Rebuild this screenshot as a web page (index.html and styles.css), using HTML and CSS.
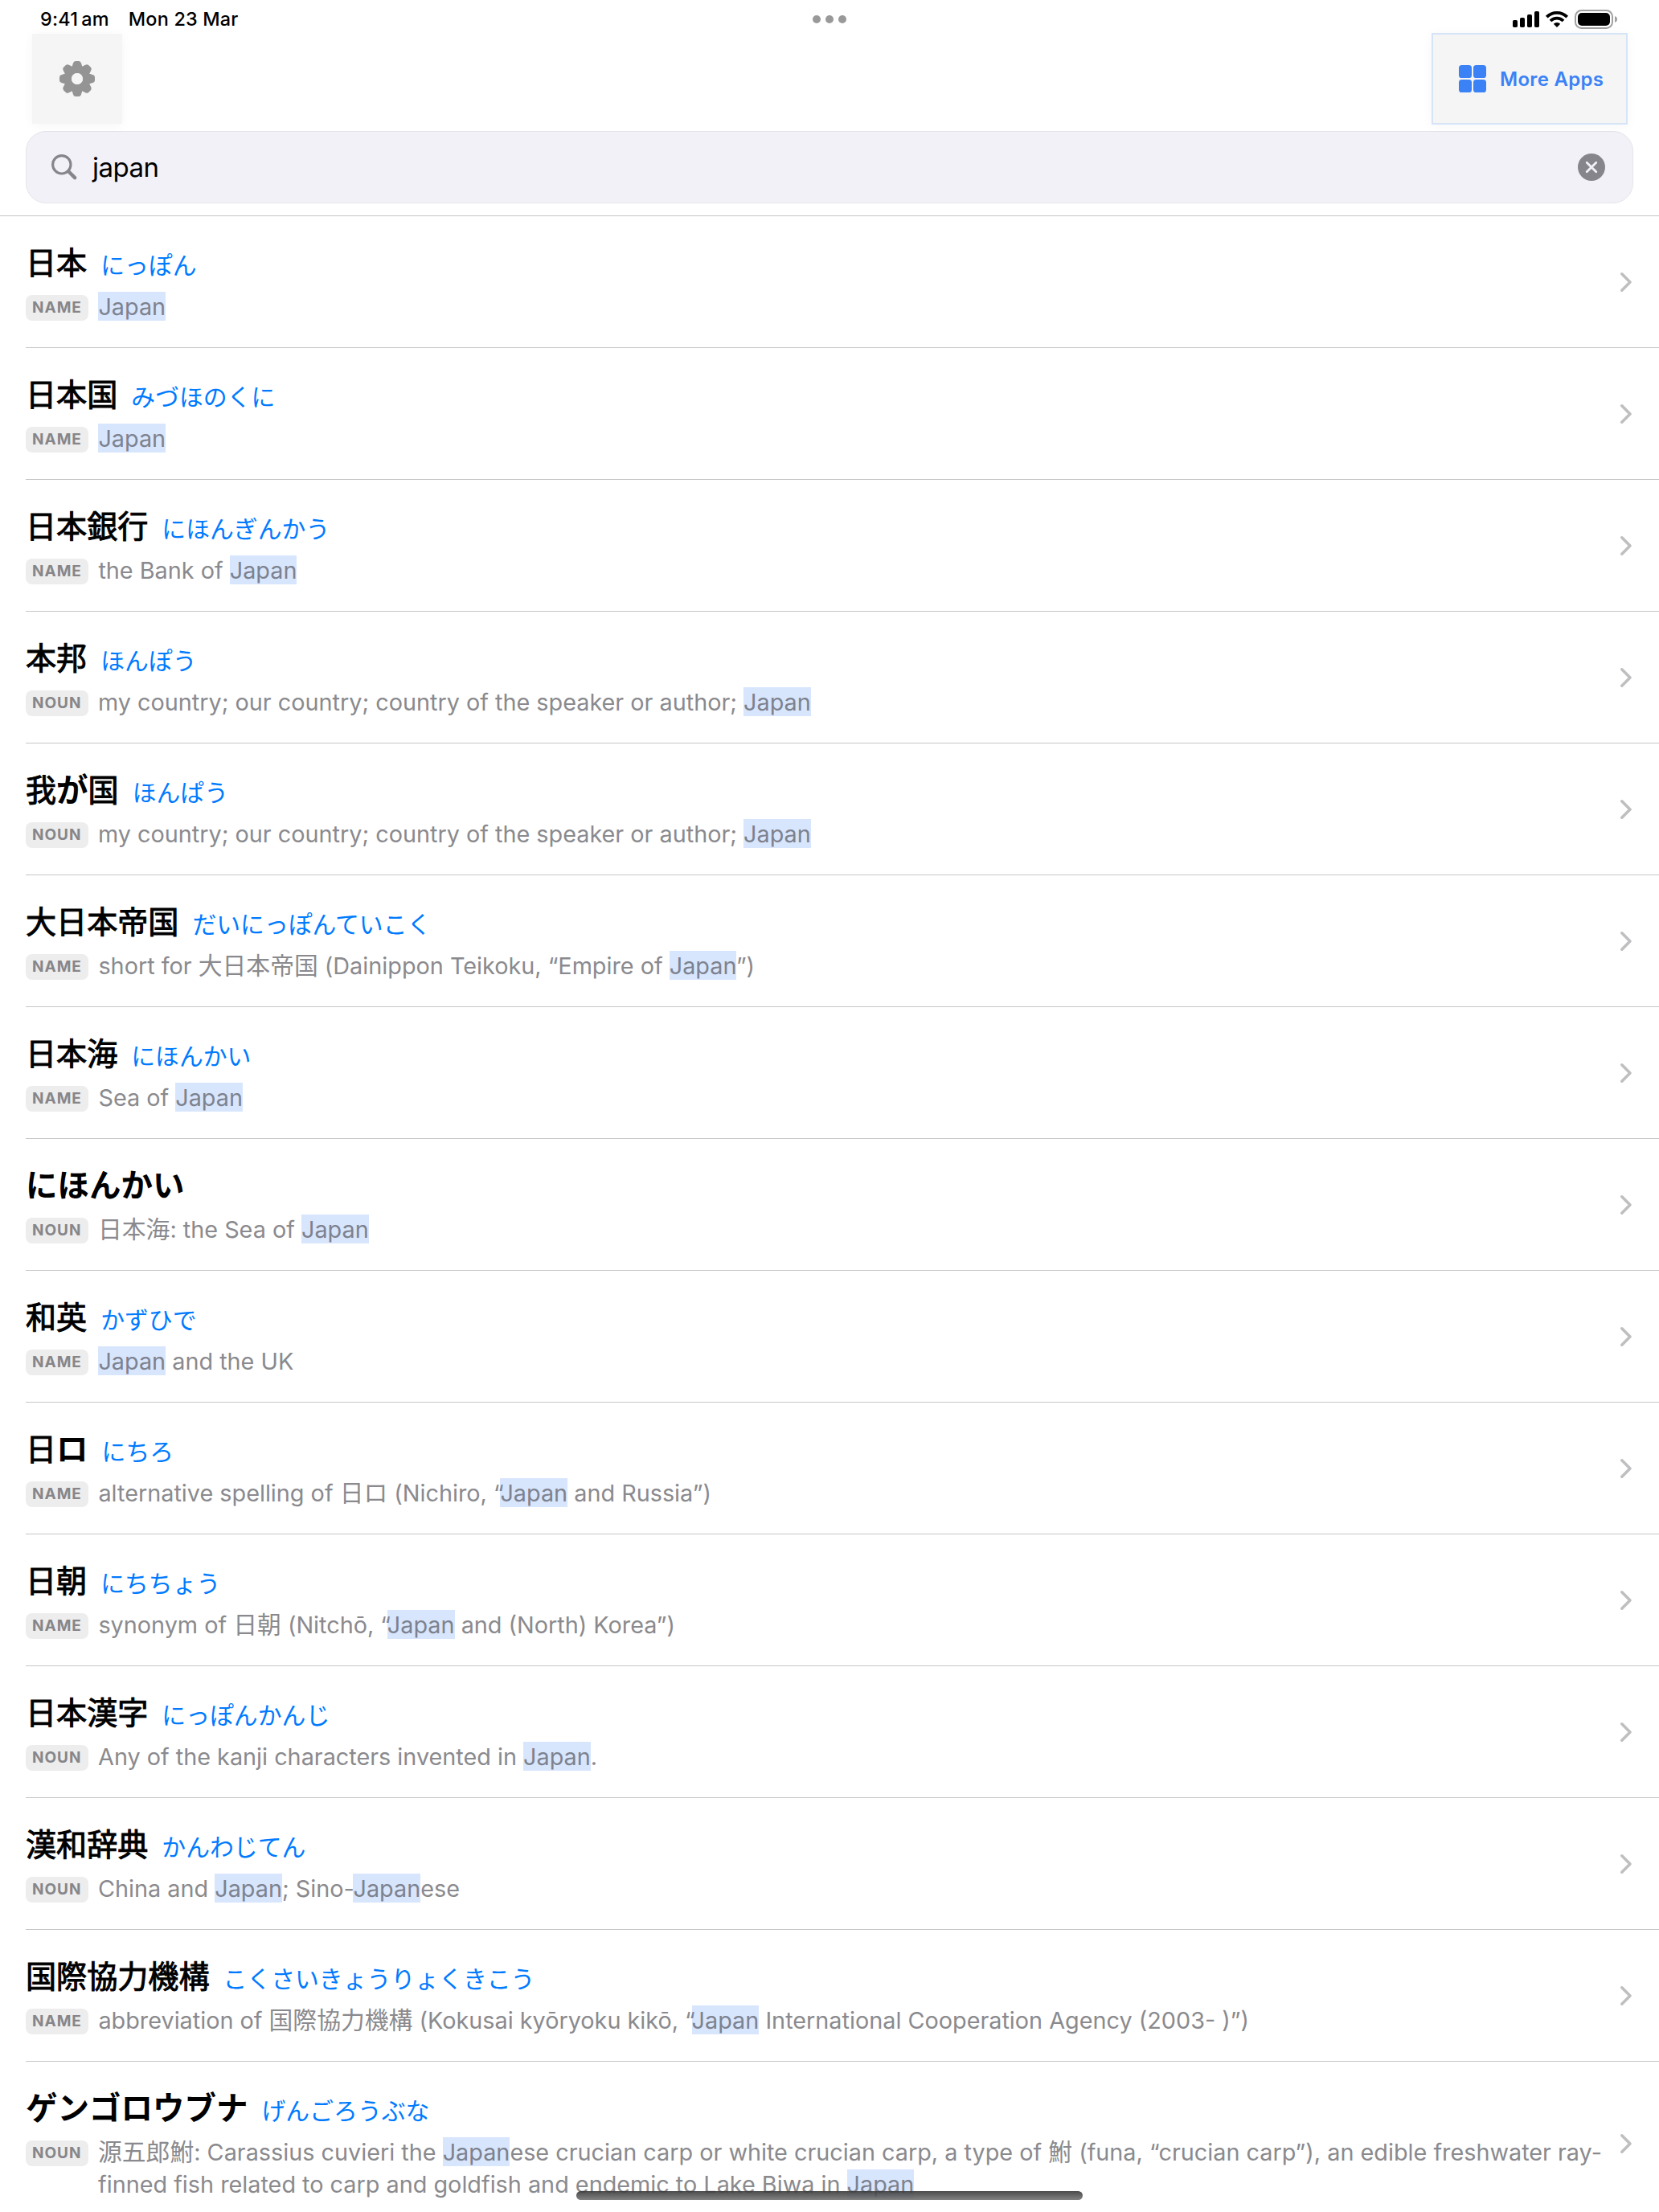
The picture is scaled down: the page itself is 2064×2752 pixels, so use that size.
FILE: index.html
```
<!DOCTYPE html>
<html lang="ja">
<head>
    <meta charset="UTF-8">
    <meta name="viewport" content="width=device-width, initial-scale=1.0">
    <title>Japanese Dictionary</title>
    <link rel="stylesheet" href="styles.css">
</head>
<body>

    <div class="status-bar">
        <div class="status-left">
            <span class="time">9:41&#8201;am</span>
            <span class="date">Mon 23 Mar</span>
        </div>
        <div class="dots"><i></i><i></i><i></i></div>
        <svg class="status-icons" width="132" height="26" viewBox="0 0 132 26">
            <rect x="0" y="14" width="6" height="9" rx="1.8"/>
            <rect x="9" y="11" width="6" height="12" rx="1.8"/>
            <rect x="18" y="7" width="6" height="16" rx="1.8"/>
            <rect x="27" y="3" width="6" height="20" rx="1.8"/>
            <g fill="none" stroke="#000" stroke-width="3.8">
                <path d="M42.3 10.2a18 18 0 0 1 25.4 0"/>
                <path d="M47 15a11.4 11.4 0 0 1 16 0"/>
            </g>
            <path d="M55 23l-4.2-4.3a6 6 0 0 1 8.4 0z"/>
            <rect x="78" y="2" width="46" height="22" rx="7.5" fill="none" stroke="#a0a0a0" stroke-width="2"/>
            <rect x="81" y="5" width="40" height="16" rx="5"/>
            <path d="M127 9q3 1.2 3 4t-3 4z" fill="#a0a0a0"/>
        </svg>
    </div>

    <header>
        <button class="settings-btn">
            <svg width="44" height="44" viewBox="-22 -22 44 44" fill="#949494">
                <defs><path id="tooth" d="M-7-13L-5-19.4Q-4.3-22-2-22H2Q4.3-22 5-19.4L7-13z"/></defs>
                <use href="#tooth"/>
                <use href="#tooth" transform="rotate(45)"/>
                <use href="#tooth" transform="rotate(90)"/>
                <use href="#tooth" transform="rotate(135)"/>
                <use href="#tooth" transform="rotate(180)"/>
                <use href="#tooth" transform="rotate(225)"/>
                <use href="#tooth" transform="rotate(270)"/>
                <use href="#tooth" transform="rotate(315)"/>
                <circle r="11.5" fill="none" stroke="#949494" stroke-width="9"/>
                <circle r="7" fill="#f5f5f5"/>
            </svg>
        </button>
        <button class="more-btn">
            <svg width="34" height="34" viewBox="0 0 34 34" fill="#3b82f6">
                <rect width="16" height="16" rx="3.6"/>
                <rect x="18" width="16" height="16" rx="3.6"/>
                <rect y="18" width="16" height="16" rx="3.6"/>
                <rect x="18" y="18" width="16" height="16" rx="3.6"/>
            </svg>
            <span>More Apps</span>
        </button>
    </header>

    <section class="search-section">
        <div class="search-box">
            <svg width="32" height="32" viewBox="0 0 32 32" fill="none" stroke="#86858b" stroke-linecap="round">
                <circle cx="12.8" cy="12.8" r="11.2" stroke-width="3.1"/>
                <path d="M21.3 21.3l7.8 7.8" stroke-width="4.4"/>
            </svg>
            <span class="query">japan</span>
            <svg width="34" height="34" viewBox="0 0 34 34">
                <circle cx="17" cy="17" r="17" fill="#86858b"/>
                <path d="M11.2 11.2l11.6 11.6M22.8 11.2L11.2 22.8" stroke="#f2f1f7" stroke-width="2.8" stroke-linecap="round"/>
            </svg>
        </div>
    </section>

    <ul class="results" id="results"></ul>

    <div class="home-indicator"></div>

    <script src="script.js"></script>
</body>
</html>
```

FILE: styles.css
```
* {
    margin: 0;
    padding: 0;
    box-sizing: border-box;
}

body {
    position: relative;
    width: 2064px;
    height: 2752px;
    overflow: hidden;
    background-color: #fff;
    color: #000;
    font-family: Inter, "Noto Sans CJK JP", sans-serif;
}

/* Status bar */
.status-bar {
    display: grid;
    grid-template-columns: 1fr auto 1fr;
    height: 42px;
    padding: 0 50px;
}

.status-left {
    display: flex;
    gap: 24px;
    font-size: 23.4px;
    font-weight: 500;
    line-height: 48px;
    letter-spacing: 0.2px;
    white-space: nowrap;
}

.dots {
    display: flex;
    gap: 6px;
    padding-top: 19px;
}

.dots i {
    width: 10px;
    height: 10px;
    border-radius: 50%;
    background-color: #999;
}

.status-icons {
    justify-self: end;
    margin-top: 11px;
}

/* Toolbar */
header {
    display: flex;
    justify-content: space-between;
    align-items: center;
    height: 112px;
    padding: 0 39px 0 40px;
}

header button {
    display: flex;
    align-items: center;
    background-color: #f5f5f5;
    border: none;
    box-shadow: 0 2px 14px rgba(0, 0, 0, 0.04);
    font-family: inherit;
}

.settings-btn {
    justify-content: center;
    width: 112px;
    height: 112px;
}

header .more-btn {
    width: 244px;
    height: 114px;
    gap: 17px;
    padding-left: 32px;
    border: 2px solid #d6e4f8;
    color: #3b82f6;
    font-size: 24px;
    font-weight: 600;
    letter-spacing: 0.3px;
    white-space: nowrap;
}

/* Search */
.search-section {
    height: 115px;
    padding: 9px 32px 0;
    border-bottom: 1px solid #c6c6c8;
}

.search-box {
    display: flex;
    align-items: center;
    height: 90px;
    padding: 0 34px 0 31px;
    background-color: #f2f1f7;
    border: 1px solid #e5e5e9;
    border-radius: 25px;
}

.query {
    flex: 1;
    margin-left: 19px;
    font-size: 33px;
    letter-spacing: -0.5px;
}

/* Results */
.results {
    list-style: none;
    margin-left: 32px;
}

.result {
    display: flex;
    align-items: center;
    padding: 29px 33px 30px 0;
    border-bottom: 1px solid #c6c6c8;
}

.entry {
    flex: 1;
}

.heading {
    display: flex;
    align-items: baseline;
    gap: 17px;
    height: 64px;
    line-height: 58px;
    white-space: nowrap;
}

/* kanji sit between regular and bold */
.word {
    font-size: 38.1px;
    -webkit-text-stroke: 1px #000;
}

.word b {
    font-size: 39.5px;
    font-weight: 700;
    -webkit-text-stroke: 0;
}

.reading {
    color: #007aff;
    font-size: 29.85px;
}

.sense {
    display: flex;
    align-items: flex-start;
}

.tag {
    height: 32px;
    margin-top: 5px;
    padding: 0 8px;
    border-radius: 8px;
    background-color: #ededed;
    color: #86868a;
    font-size: 19px;
    font-weight: 700;
    line-height: 32px;
    letter-spacing: 1px;
}

.gloss {
    margin-left: 12.5px;
    color: #8a8a8e;
    font-size: 28.8px;
    line-height: 40px;
    white-space: nowrap;
}

.gloss span {
    font-size: 29.8px;
    line-height: 1;
}

/* translucent, so a quote kerned under the J stays visible */
mark {
    padding-top: 1px;
    background-color: rgba(59, 130, 246, 0.2);
    color: #7d828f;
}

.chevron {
    display: block;
    margin-top: 1px;
}

.home-indicator {
    position: absolute;
    left: 717px;
    top: 2726px;
    width: 630px;
    height: 11px;
    border-radius: 6px;
    background: linear-gradient(rgba(56, 56, 56, 0.9), rgba(116, 116, 116, 0.9));
}
```

FILE: script.js
```
// [word, reading, tag, gloss] - [brackets] mark the matched text
const entries = [
    ["日本", "にっぽん", "NAME", "[Japan]"],
    ["日本国", "みづほのくに", "NAME", "[Japan]"],
    ["日本銀行", "にほんぎんかう", "NAME", "the Bank of [Japan]"],
    ["本邦", "ほんぽう", "NOUN", "my country; our country; country of the speaker or author; [Japan]"],
    ["我が国", "ほんぱう", "NOUN", "my country; our country; country of the speaker or author; [Japan]"],
    ["大日本帝国", "だいにっぽんていこく", "NAME", "short for 大日本帝国 (Dainippon Teikoku, “Empire of [Japan]”)"],
    ["日本海", "にほんかい", "NAME", "Sea of [Japan]"],
    ["にほんかい", "", "NOUN", "日本海: the Sea of [Japan]"],
    ["和英", "かずひで", "NAME", "[Japan] and the UK"],
    ["日ロ", "にちろ", "NAME", "alternative spelling of 日ロ (Nichiro, “[Japan] and Russia”)"],
    ["日朝", "にちちょう", "NAME", "synonym of 日朝 (Nitchō, “[Japan] and (North) Korea”)"],
    ["日本漢字", "にっぽんかんじ", "NOUN", "Any of the kanji characters invented in [Japan]."],
    ["漢和辞典", "かんわじてん", "NOUN", "China and [Japan]; Sino-[Japan]ese"],
    ["国際協力機構", "こくさいきょうりょくきこう", "NAME", "abbreviation of 国際協力機構 (Kokusai kyōryoku kikō, “[Japan] International Cooperation Agency (2003- )”)"],
    ["ゲンゴロウブナ", "げんごろうぶな", "NOUN", "源五郎鮒: Carassius cuvieri the [Japan]ese crucian carp or white crucian carp, a type of 鮒 (funa, “crucian carp”), an edible freshwater ray-<br>finned fish related to carp and goldfish and endemic to Lake Biwa in [Japan]"]
];

const results = document.getElementById("results");

entries.forEach(([word, reading, tag, gloss]) => {
    const title = word.replace(/[ぁ-んァ-ヶ]+/g, "<b>$&</b>");
    const text = gloss
        .replace(/[ァ-ヶ一-龥]+/g, "<span>$&</span>")
        .replace(/\[(.+?)\]/g, "<mark>$1</mark>");

    const item = document.createElement("li");
    item.classList.add("result");
    item.innerHTML = `
        <div class="entry">
            <div class="heading">
                <span class="word">${title}</span>
                <span class="reading">${reading}</span>
            </div>
            <div class="sense">
                <span class="tag">${tag}</span>
                <p class="gloss">${text}</p>
            </div>
        </div>
        <svg class="chevron" width="16" height="26" viewBox="0 0 16 26" fill="none" stroke="#bfbfc1" stroke-width="3.6" stroke-linecap="round" stroke-linejoin="round">
            <path d="M2.8 2.8L13 13L2.8 23.2"/>
        </svg>`;
    results.appendChild(item);
});
```
